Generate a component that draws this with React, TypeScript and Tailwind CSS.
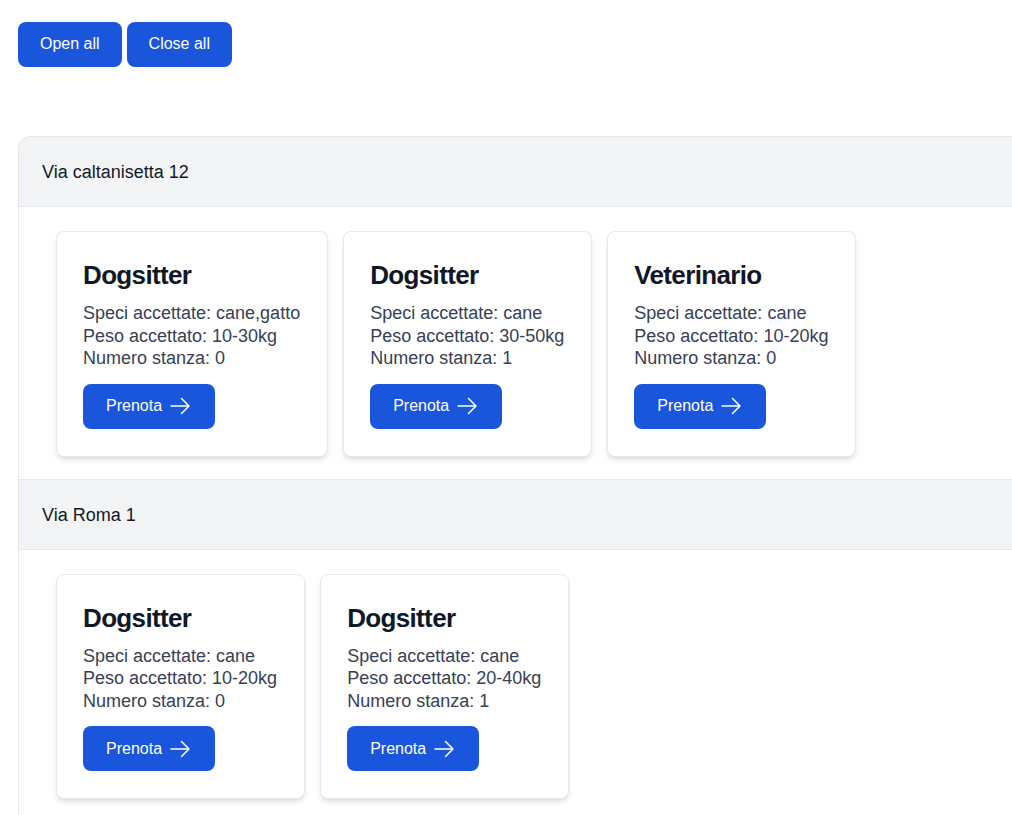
const locations = [
  {
    address: "Via caltanisetta 12",
    services: [
      { title: "Dogsitter", species: "cane,gatto", weight: "10-30kg", room: 0 },
      { title: "Dogsitter", species: "cane", weight: "30-50kg", room: 1 },
      { title: "Veterinario", species: "cane", weight: "10-20kg", room: 0 },
    ],
  },
  {
    address: "Via Roma 1",
    services: [
      { title: "Dogsitter", species: "cane", weight: "10-20kg", room: 0 },
      { title: "Dogsitter", species: "cane", weight: "20-40kg", room: 1 },
    ],
  },
];

function ArrowRight() {
  return (
    <svg
      className="h-6 w-6"
      viewBox="0 0 24 24"
      fill="none"
      stroke="currentColor"
      strokeWidth={1.5}
      strokeLinecap="round"
      strokeLinejoin="round"
    >
      <path d="M13.5 4.5 21 12m0 0-7.5 7.5M21 12H3" />
    </svg>
  );
}

export default function App() {
  return (
    <div className="min-h-[815px] overflow-hidden bg-white font-['Liberation_Sans',Arial,sans-serif]">
      <div className="ml-[18px] mt-[22px] flex gap-[5px]">
        <button className="h-[45px] rounded-lg bg-[#1a56db] px-[22px] pb-px text-base text-white">
          Open all
        </button>
        <button className="h-[45px] rounded-lg bg-[#1a56db] px-[22px] pb-px text-base text-white">
          Close all
        </button>
      </div>

      <div className="ml-[18px] mt-[69px] w-[1100px]">
        {locations.map((loc, i) => (
          <div key={loc.address}>
            <div
              className={`border border-gray-200 bg-gray-100 px-[23px] pb-5 pt-[21px] text-lg leading-7 text-gray-900 ${
                i === 0 ? "rounded-t-xl" : "border-t-0"
              }`}
            >
              {loc.address}
            </div>
            <div className="border border-t-0 border-gray-200 pb-[22px] pl-[37px] pt-6">
              <div className="flex gap-[15px]">
                {loc.services.map((s, j) => (
                  <div
                    key={j}
                    className="rounded-lg border border-gray-200 bg-white pb-[27px] pl-[26px] pr-[27px] pt-[26px] shadow-md"
                  >
                    <h5 className="mb-[10px] text-[26px] font-bold leading-[34px] tracking-tight text-gray-900">
                      {s.title}
                    </h5>
                    <p className="text-lg leading-tight text-gray-700">
                      Speci accettate: {s.species}
                    </p>
                    <p className="text-lg leading-tight text-gray-700">
                      Peso accettato: {s.weight}
                    </p>
                    <p className="text-lg leading-tight text-gray-700">
                      Numero stanza: {s.room}
                    </p>
                    <button className="mt-[14px] flex h-[45px] items-center gap-1.5 rounded-lg bg-[#1a56db] pl-[23px] pr-[23px] text-base text-white">
                      Prenota
                      <ArrowRight />
                    </button>
                  </div>
                ))}
              </div>
            </div>
          </div>
        ))}
      </div>
    </div>
  );
}
